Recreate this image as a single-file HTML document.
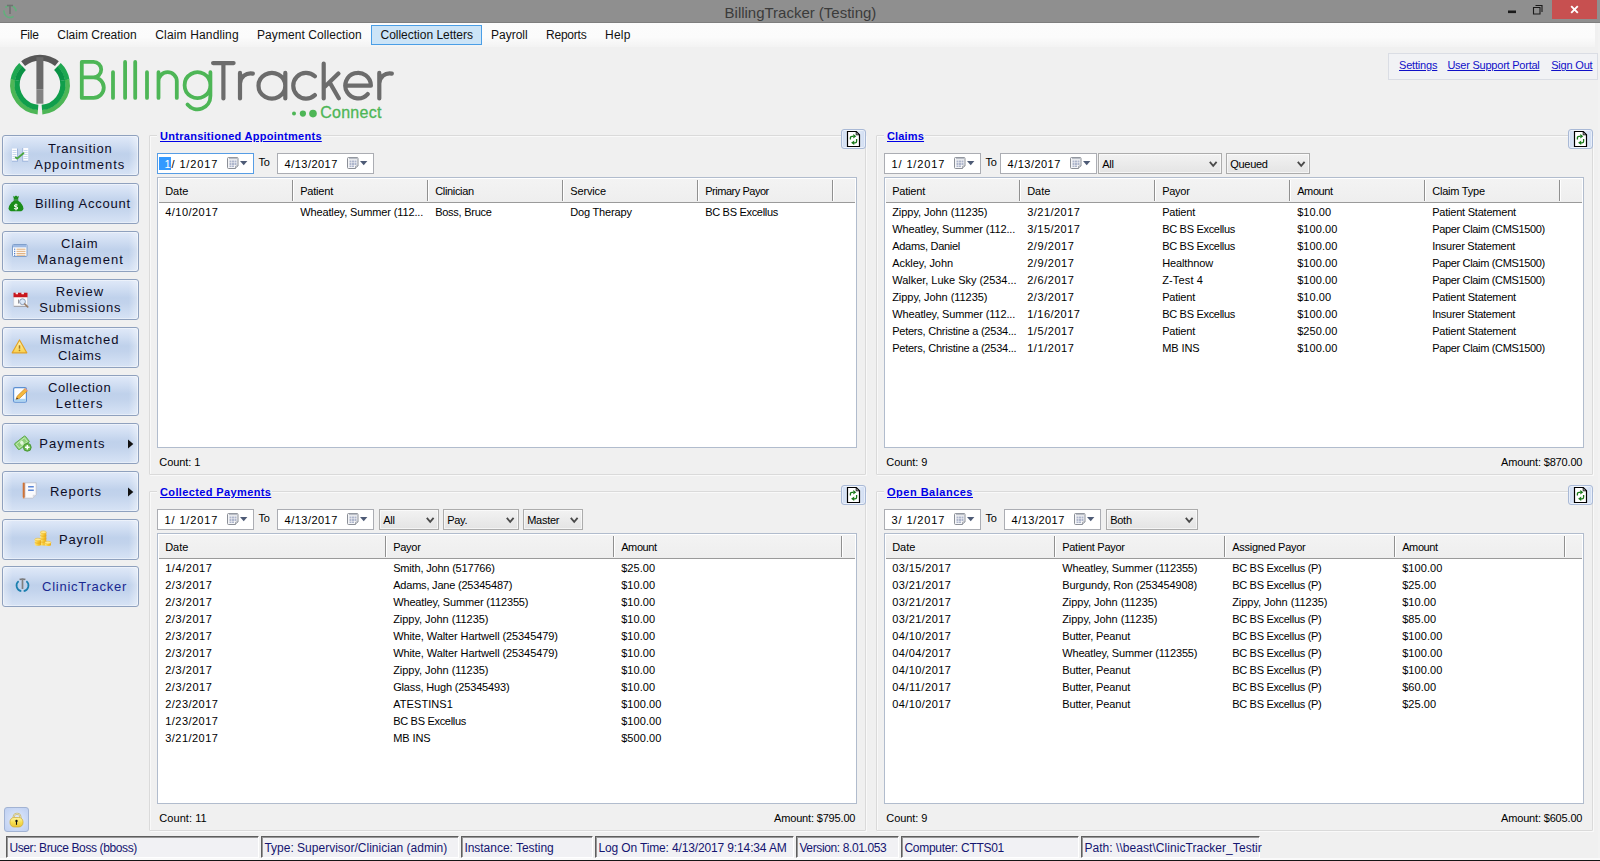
<!DOCTYPE html>
<html><head><meta charset="utf-8"><title>BillingTracker (Testing)</title>
<style>
*{box-sizing:border-box;margin:0;padding:0}
html,body{width:1600px;height:861px;overflow:hidden;background:#f0f0f0}
body{position:relative;font-family:"Liberation Sans",sans-serif;font-size:11px;color:#000}
span{position:absolute;white-space:pre;line-height:1;letter-spacing:-0.27px}
div{position:absolute}
svg{position:absolute;overflow:visible}
.d{letter-spacing:.32px}
.m{letter-spacing:-.06px}
.lnk{color:#1010c8;text-decoration:underline}
.hd{color:#0000e6;font-weight:700;text-decoration:underline;letter-spacing:.3px}
.mn{letter-spacing:-.05px;font-size:12px;color:#111}
.sb{font-size:13px;letter-spacing:.75px;color:#0c0c24}
.st{font-size:12px;color:#151570;letter-spacing:-.1px}
.gb{border:1px solid #dadada;box-shadow:inset 1px 1px 0 rgba(255,255,255,.6),1px 1px 0 rgba(255,255,255,.6);border-radius:1px}
.lv{background:#fff;border:1px solid #b1bccd}
.lh{left:1px;top:1px;right:1px;height:24px;background:linear-gradient(#f3f3f3,#eeeeee);border-bottom:1px solid #9a9a9a}
.sep{top:2px;width:1px;height:21px;background:#909090;box-shadow:1px 0 0 #fff}
.dp{background:#fff;border:1px solid #abadb3;width:97px;height:21px}
.cb{border:1px solid #acacac;height:21px;background:linear-gradient(#f2f2f2,#e4e4e4);box-shadow:inset 0 0 0 1px rgba(255,255,255,.6)}
.btn{left:2px;width:137px;height:41px;border:1px solid #8fa1be;border-radius:3px;
 background:linear-gradient(90deg,rgba(255,255,255,.4),rgba(255,255,255,0) 7%,rgba(255,255,255,0) 93%,rgba(255,255,255,.4)),linear-gradient(#e0e9f8 0%,#d2dff3 20%,#bfd1eb 46%,#c2d3ec 60%,#d7e3f5 100%);box-shadow:inset 0 0 0 1px rgba(255,255,255,.4)}
.rb{width:25px;height:20px;border:1px solid #a9b9d6;border-radius:3px;background:linear-gradient(90deg,#cfdcf2,#e9f0fa 40%,#e9f0fa 60%,#cfdcf2);box-shadow:inset 0 0 0 1px rgba(255,255,255,.5)}
.sp{top:836px;height:22px;background:#f1f1f4;border-top:1px solid #5e5e5e;border-left:1px solid #5e5e5e;border-right:1px solid #fff;border-bottom:1px solid #fff;box-shadow:inset 1px 1px 0 #989898}
</style></head><body>
<div style="left:0;top:0;width:1600px;height:23px;background:#8f8f8f;border-bottom:1px solid #7e7e7e"></div>
<div style="left:1598px;top:23px;width:2px;height:838px;background:#f2f2f2"></div>
<svg style="left:2px;top:3px;opacity:.8" width="16" height="16" viewBox="0 0 16 16"><circle cx="8" cy="8.5" r="6" fill="none" stroke="#58b878" stroke-width="1.6" stroke-dasharray="14 3 14 7" stroke-dashoffset="-5.5"/><path d="M5 2.6h6M8 2.6v8.4" stroke="#6a6a6a" stroke-width="1.5" fill="none"/></svg>
<span style="left:724.60px;top:4.70px;font-size:15px;color:#3b3b3b;letter-spacing:-0.013px;">BillingTracker (Testing)</span>
<div style="left:1552px;top:0;width:45px;height:19px;background:#c75050"></div>
<svg style="left:1500px;top:0" width="100" height="22" viewBox="0 0 100 22">
<rect x="8" y="10.5" width="8" height="2.6" fill="#1a1a1a"/>
<path d="M35.5 5.5h6.5v6.5M33.5 7.5h6.500v6.500h-6.500z" fill="none" stroke="#1a1a1a" stroke-width="1.1"/>
<path d="M71.2 6.2l6.600 6.600M77.800 6.200l-6.600 6.600" stroke="#fff" stroke-width="1.9"/>
</svg>
<div style="left:0;top:23px;width:1595px;height:24px;background:linear-gradient(#fcfcfc 0%,#fbfbfb 60%,#f3f3f3 100%)"></div>
<div style="left:371px;top:25px;width:111px;height:20px;background:#cce4f7;border:1px solid #4a9ee6"></div>
<span class="mn" style="left:20.20px;top:28.54px;font-size:12px;letter-spacing:-0.181px;">File</span>
<span class="mn" style="left:57.30px;top:28.54px;font-size:12px;letter-spacing:-0.005px;">Claim Creation</span>
<span class="mn" style="left:155.30px;top:28.54px;font-size:12px;letter-spacing:0.148px;">Claim Handling</span>
<span class="mn" style="left:257.00px;top:28.54px;font-size:12px;letter-spacing:0.077px;">Payment Collection</span>
<span class="mn" style="left:380.50px;top:28.54px;font-size:12px;letter-spacing:-0.013px;">Collection Letters</span>
<span class="mn" style="left:491.00px;top:28.54px;font-size:12px;letter-spacing:0.002px;">Payroll</span>
<span class="mn" style="left:546.00px;top:28.54px;font-size:12px;letter-spacing:-0.222px;">Reports</span>
<span class="mn" style="left:605.00px;top:28.54px;font-size:12px;letter-spacing:0.237px;">Help</span>
<svg style="left:0;top:0" width="420" height="130" viewBox="0 0 420 130"><g fill="none"><path d="M20.83,64.75A27.6,27.6 0 0 0 12.82,79.81" stroke="#1fa751" stroke-width="4.6"/><path d="M24.09,68.13A22.9,22.9 0 0 0 17.45,80.62" stroke="#0a9245" stroke-width="5.2"/><path d="M12.84,79.67A27.6,27.6 0 0 0 37.79,112.11" stroke="#4db656" stroke-width="4.6"/><path d="M17.47,80.51A22.9,22.9 0 0 0 38.16,107.43" stroke="#109e4b" stroke-width="5.2"/><path d="M59.17,64.75A27.6,27.6 0 0 1 67.18,79.81" stroke="#1fa751" stroke-width="4.6"/><path d="M55.91,68.13A22.9,22.9 0 0 1 62.55,80.62" stroke="#0a9245" stroke-width="5.2"/><path d="M67.16,79.67A27.6,27.6 0 0 1 42.21,112.11" stroke="#4db656" stroke-width="4.6"/><path d="M62.53,80.51A22.9,22.9 0 0 1 41.84,107.43" stroke="#109e4b" stroke-width="5.2"/></g><path d="M23.10,63.73A26.85,26.85 0 0 1 56.90,63.73" fill="none" stroke="#575757" stroke-width="6.1"/><rect x="36.4" y="57.2" width="7" height="32" fill="#696969"/><rect x="36.4" y="89.2" width="7" height="14.5" fill="#828282"/><path d="M81.8,61.9V97.9M81.8,61.9H93.5A7.7,7.7 0 0 1 93.5,77.3H81.8M93.5,77.3A10.3,10.3 0 0 1 93.5,97.9H81.8M113,72.2V97.9M125.1,61.9V97.9M135.2,61.9V97.9M147,72.2V97.9M158.5,72.2V97.9M158.5,81.35A9.15,9.15 0 0 1 176.8,81.35V97.9M210.4,85.1A12.9,12.9 0 1 0 210.4,85.2M210.4,72.2V96.1A12.9,12.9 0 0 1 187.5,104.5" fill="none" stroke="#4db656" stroke-width="3.8" stroke-linecap="round" stroke-linejoin="round"/><path d="M213.1,63.1H233.6M223.4,63.1V98.5M240,72.9V98.5M240,83.5C240.3,76.8 246,72.4 252.8,73.6M285.3,85.7A13.4,12.85 0 1 0 285.3,85.8M285.3,72.9V98.5M314.86,76.30A12.85,12.85 0 1 0 314.86,95.10M323.7,63.5V98.5M324.5,87L338.4,73.6M329.8,82.6L338.8,98.2M345.2,85.7H370.9A12.8,12.8 0 1 0 367.71,94.10M379.3,72.9V98.5M379.3,83.5C379.6,76.8 385,72.4 391.8,73.6" fill="none" stroke="#6c6c6c" stroke-width="4.2" stroke-linecap="round" stroke-linejoin="round"/><circle cx="294" cy="113.6" r="2" fill="#4db656"/><circle cx="302.9" cy="113.6" r="3.1" fill="#4db656"/><circle cx="313" cy="113.6" r="3.8" fill="#4db656"/></svg>
<span style="left:320.20px;top:105.16px;font-size:16px;color:#4db656;letter-spacing:0.268px;-webkit-text-stroke:.3px #4db656;">Connect</span>
<div style="left:1388px;top:53px;width:210px;height:27px;border:1px solid #dadde4;background:#f1f2f5"></div>
<span class="lnk" style="left:1399.00px;top:60.29px;letter-spacing:-0.179px;">Settings</span>
<span class="lnk" style="left:1447.40px;top:60.29px;letter-spacing:-0.234px;">User Support Portal</span>
<span class="lnk" style="left:1551.20px;top:60.29px;letter-spacing:-0.188px;">Sign Out</span>
<div class="btn" style="top:135px"></div>
<div class="btn" style="top:183px"></div>
<div class="btn" style="top:231px"></div>
<div class="btn" style="top:279px"></div>
<div class="btn" style="top:327px"></div>
<div class="btn" style="top:375px"></div>
<div class="btn" style="top:423px"></div>
<div class="btn" style="top:471px"></div>
<div class="btn" style="top:519px"></div>
<div class="btn" style="top:566px"></div>
<span style="left:47.90px;top:141.60px;font-size:13px;color:#0d0d26;letter-spacing:0.810px;">Transition</span>
<span style="left:34.30px;top:157.60px;font-size:13px;color:#0d0d26;letter-spacing:0.955px;">Appointments</span>
<span style="left:34.90px;top:197.40px;font-size:13px;color:#0d0d26;letter-spacing:0.760px;">Billing Account</span>
<span style="left:61.00px;top:237.40px;font-size:13px;color:#0d0d26;letter-spacing:0.841px;">Claim</span>
<span style="left:37.20px;top:253.40px;font-size:13px;color:#0d0d26;letter-spacing:1.090px;">Management</span>
<span style="left:55.80px;top:285.40px;font-size:13px;color:#0d0d26;letter-spacing:0.935px;">Review</span>
<span style="left:39.20px;top:301.40px;font-size:13px;color:#0d0d26;letter-spacing:0.770px;">Submissions</span>
<span style="left:40.00px;top:333.40px;font-size:13px;color:#0d0d26;letter-spacing:0.936px;">Mismatched</span>
<span style="left:58.00px;top:349.00px;font-size:13px;color:#0d0d26;letter-spacing:0.673px;">Claims</span>
<span style="left:47.90px;top:380.80px;font-size:13px;color:#0d0d26;letter-spacing:0.634px;">Collection</span>
<span style="left:55.80px;top:396.80px;font-size:13px;color:#0d0d26;letter-spacing:1.175px;">Letters</span>
<span style="left:39.20px;top:436.80px;font-size:13px;color:#0d0d26;letter-spacing:1.084px;">Payments</span>
<span style="left:50.00px;top:484.60px;font-size:13px;color:#0d0d26;letter-spacing:0.928px;">Reports</span>
<span style="left:59.00px;top:532.70px;font-size:13px;color:#0d0d26;letter-spacing:0.775px;">Payroll</span>
<span style="left:42.10px;top:579.70px;font-size:13px;color:#1a2890;letter-spacing:0.745px;">ClinicTracker</span>
<svg style="left:127px;top:439px" width="8" height="10" viewBox="0 0 8 10"><path d="M1 0.500L6.300 5 1 9.500z" fill="#111"/></svg>
<svg style="left:127px;top:486.7px" width="8" height="10" viewBox="0 0 8 10"><path d="M1 0.500L6.300 5 1 9.500z" fill="#111"/></svg>
<div style="left:4px;top:807px;width:25px;height:25px;border:1px solid #a2b3d3;border-radius:3px;background:radial-gradient(ellipse at 50% 50%,#e3ebfb 0%,#c9d8f5 65%,#bfd0f1 100%)"></div>
<svg style="left:9px;top:811px" width="16" height="18" viewBox="0 0 16 18">
<defs><linearGradient id="lk" x1="0" y1="0" x2="0" y2="1"><stop offset="0" stop-color="#fcf3a8"/><stop offset=".5" stop-color="#f7df52"/><stop offset="1" stop-color="#e9c538"/></linearGradient></defs>
<path d="M4.700 8V6.050a3.350 3.350 0 0 1 6.700 0V8" fill="none" stroke="#bfb074" stroke-width="2.100"/>
<path d="M4.700 8V6.050a3.350 3.350 0 0 1 6.700 0V8" fill="none" stroke="#ece6b8" stroke-width=".9"/>
<rect x="1" y="6.500" width="13" height="9.500" rx="4.200" fill="url(#lk)" stroke="#cfa92e" stroke-width=".7"/>
<circle cx="7.500" cy="9.800" r="1.150" fill="#111"/><path d="M7.500 9.800v4" stroke="#111" stroke-width="1.100"/><path d="M6.300 10.800l1.200-1.600 1.200 1.600z" fill="#111"/></svg>
<svg style="left:11px;top:147px" width="18" height="16" viewBox="0 0 18 16">
<rect x="1" y="1.500" width="5.500" height="12.500" fill="#fdfdff"/><rect x="11.700" y="1" width="5.500" height="13" fill="#fdfdff"/>
<path d="M1.500 3.500h4M1.500 5.500h4M1.500 7.500h4M1.500 9.500h4M1.500 11.500h4M12.700 3.500h4M12.700 5.500h4M12.700 7.500h4M12.700 9.500h4M12.700 11.500h4" stroke="#c6d6ee" stroke-width=".9"/>
<path d="M6.500 1.500v12.500M11.700 1v13" stroke="#9fb6dc" stroke-width="1"/>
<path d="M1 14.200h6M11.200 14.200h6" stroke="#9fb6dc" stroke-width="1"/>
<path d="M4.800 10.600l1.300 1L12.400 6.200" fill="none" stroke="#4aa53e" stroke-width="1.900" stroke-linecap="round" stroke-linejoin="round"/></svg>
<svg style="left:8px;top:194.500px" width="16" height="17" viewBox="0 0 16 17">
<path d="M5 .8l1.200 1 1.800-1.300 1.800 1.300 1.200-1-.9 3.200h-4.200z" fill="#1c8c1c"/>
<path d="M5.700 4.300h4.600v1.400h-4.600z" fill="#157a15"/>
<path d="M5.800 5.700C3 7.500.6 10.600.6 13.200c0 2.200 1.600 3.100 3.600 3.100h7.600c2 0 3.600-.9 3.600-3.100 0-2.600-2.400-5.700-5.200-7.500z" fill="#1a8d1a"/>
<path d="M9.500 10.300c-.5-.8-2.900-.9-3 .4s3.100.8 3.100 2.200-2.800 1.300-3.400.3" fill="none" stroke="#fff" stroke-width="1.100"/><path d="M8 8.600v6.900" stroke="#fff" stroke-width=".8"/></svg>
<svg style="left:12px;top:244px" width="16" height="13" viewBox="0 0 16 13">
<rect x=".5" y=".5" width="14.500" height="12" rx="1" fill="#fff" stroke="#7f9fcc"/>
<rect x="1" y="1" width="13.500" height="2.400" fill="#9db9e3"/>
<path d="M4.500 5.200h9M4.500 7.300h9M4.500 9.400h9M4.500 11.200h9" stroke="#d9a066" stroke-width=".9"/>
<path d="M2 5.200h1.300M2 7.300h1.300M2 9.400h1.300M2 11.200h1.300" stroke="#3f6fc0" stroke-width="1"/></svg>
<svg style="left:12.500px;top:291.500px" width="17" height="16" viewBox="0 0 17 16">
<rect x=".8" y="3" width="13.500" height="11.500" fill="#fcfcfc" stroke="#c9c9cf" stroke-width=".6"/>
<path d="M.5.800h2.300v1.300h2.200V.8h3.600v1.300h2.200V.8h3.700v4.500H.5z" fill="#c8171f"/>
<path d="M2.800.8h2.200v1.500H2.800zM8.600.8h2.200v1.500H8.600z" fill="#f6e6e6"/>
<path d="M.8 14.300h13.500" stroke="#9a9aa2" stroke-width="1"/>
<circle cx="9.500" cy="9.700" r="2.900" fill="#dbe8f8" stroke="#8a9bb6" stroke-width="1"/>
<path d="M11.800 12l2.900 2.800" stroke="#9a7d66" stroke-width="1.700" stroke-linecap="round"/>
<path d="M5.500 7.500v4" stroke="#8a8a90" stroke-width=".9"/></svg>
<svg style="left:11.200px;top:339.200px" width="17" height="15" viewBox="0 0 17 15">
<defs><linearGradient id="wg" x1="0" y1="0" x2="0" y2="1"><stop offset="0" stop-color="#fff6b5"/><stop offset="1" stop-color="#f9d04a"/></linearGradient></defs>
<path d="M8.500 1L15.800 13.800H1.200z" fill="url(#wg)" stroke="#e3a325" stroke-width="1.200" stroke-linejoin="round"/>
<path d="M8.500 6.300v3.400" stroke="#a77a22" stroke-width="1.500"/><circle cx="8.500" cy="11.300" r=".85" fill="#a77a22"/></svg>
<svg style="left:13px;top:387px" width="16" height="16" viewBox="0 0 16 16">
<rect x=".6" y=".6" width="12.800" height="14.600" rx="1.500" fill="#fbfdff" stroke="#5c8fd2" stroke-width="1.200"/>
<rect x="1.300" y="11.800" width="11.400" height="2.700" fill="#a9d3f2"/>
<path d="M3.200 12.300l1-3.200L12 1.600l2.400 2.300-7.900 7.500z" fill="#f5b83c" stroke="#c9872a" stroke-width=".7" stroke-linejoin="round"/>
<path d="M3.200 12.300l.6-1.900 1.400 1.300z" fill="#3a2a1a"/>
<path d="M12 1.600l2.400 2.300" stroke="#e59a9a" stroke-width="1.200"/></svg>
<svg style="left:14.800px;top:435px" width="17" height="17" viewBox="0 0 17 17">
<g transform="rotate(-38 7 8)"><rect x=".2" y="4" width="13.600" height="7.600" rx=".8" fill="#8fd07a" stroke="#5aa848" stroke-width=".9"/>
<rect x="1.800" y="5.400" width="10.400" height="4.800" fill="none" stroke="#c9ecbc" stroke-width=".8"/><ellipse cx="7" cy="7.800" rx="1.700" ry="2" fill="#e4f6dc"/></g>
<circle cx="12.300" cy="12.300" r="3.900" fill="#69b84d" stroke="#3f8f2b" stroke-width=".8"/>
<path d="M12.300 10v4.600M10 12.300h4.600" stroke="#fff" stroke-width="1.500"/></svg>
<svg style="left:22px;top:482px" width="15.800" height="17" viewBox="0 0 15 17" preserveAspectRatio="none">
<path d="M2.600.8h10.900v12l-3.300 3.400H2.600z" fill="#fbfbfd" stroke="#b9bcc8" stroke-width=".8"/>
<path d="M13.400 12.800l-3.200 3.300v-3.300z" fill="#d9dbe4"/>
<path d="M1.600.6v15.800" stroke="#e0813f" stroke-width="1.500"/>
<path d="M.5 2h2.600M.5 4h2.600M.5 6h2.600M.5 8h2.600M.5 10h2.600M.5 12h2.600M.5 14h2.600" stroke="#b85a20" stroke-width=".7"/>
<path d="M5.800 4.800h5.400M5.800 8.200h5.400" stroke="#5b86d6" stroke-width="1.500"/></svg>
<svg style="left:33.500px;top:529.500px" width="18" height="18" viewBox="0 0 18 18">
<defs><linearGradient id="cg" x1="0" y1="0" x2="1" y2="0"><stop offset="0" stop-color="#ffe680"/><stop offset=".55" stop-color="#f7c830"/><stop offset="1" stop-color="#e9a91c"/></linearGradient></defs>
<path d="M6.300 2.200v12.500c0 1.200 6 1.200 6 0V2.200z" fill="url(#cg)"/><ellipse cx="9.300" cy="2.200" rx="3" ry="1.300" fill="#ffe98f" stroke="#e9b52a" stroke-width=".5"/>
<path d="M6.300 5.300c0 1.200 6 1.200 6 0M6.300 8.300c0 1.200 6 1.200 6 0M6.300 11.300c0 1.200 6 1.200 6 0" fill="none" stroke="#dfa21f" stroke-width=".6"/>
<path d="M.8 9.500v5.300c0 1.300 6.200 1.300 6.200 0V9.500z" fill="url(#cg)"/><ellipse cx="3.900" cy="9.500" rx="3.100" ry="1.300" fill="#ffe98f" stroke="#e9b52a" stroke-width=".5"/>
<path d="M.8 12.300c0 1.200 6.200 1.200 6.200 0" fill="none" stroke="#dfa21f" stroke-width=".6"/>
<path d="M10.800 12.600v2.400c0 1.300 6.200 1.300 6.200 0v-2.400z" fill="url(#cg)"/><ellipse cx="13.900" cy="12.600" rx="3.100" ry="1.400" fill="#ffe98f" stroke="#e9b52a" stroke-width=".5"/></svg>
<svg style="left:15px;top:577.500px" width="15" height="15" viewBox="0 0 15 15">
<path d="M3.600 3.200A5.700 5.700 0 0 0 6.300 13.200" fill="none" stroke="#1b7fae" stroke-width="1.700"/>
<path d="M11.400 3.200A5.700 5.700 0 0 1 8.700 13.200" fill="none" stroke="#1b7fae" stroke-width="1.700"/>
<path d="M4.600 1.600Q7.500.3 10.400 1.600" fill="none" stroke="#777" stroke-width="1.600"/><path d="M7.500 1.200v9.800" stroke="#808080" stroke-width="1.700"/></svg>
<div class="gb" style="left:149px;top:135px;width:717px;height:340px"></div>
<div style="left:157px;top:132px;width:165.6px;height:8px;background:#f0f0f0"></div>
<span class="hd" style="left:160.00px;top:130.79px;font-weight:700;letter-spacing:0.281px;">Untransitioned Appointments</span>
<div class="rb" style="left:841px;top:129px"></div><svg style="left:846px;top:130px" width="15" height="18" viewBox="0 0 15 18"><path d="M1.500 1.500h8.800l3.200 3.200v11.800h-12z" fill="#fff" stroke="#000" stroke-width="1.200"/><path d="M10.200 1.800v3h3" fill="none" stroke="#000" stroke-width=".9"/><g fill="none" stroke="#1a7a1a" stroke-width="1.300"><path d="M4.400 9.600V7.900Q4.400 6.300 6 6.300H7.500"/><path d="M10.600 9V11.200Q10.600 12.800 9 12.800H8"/></g><path d="M7.300 4L10.300 6.300 7.300 8.600zM8.200 10.500L5.100 12.800 8.200 15.100z" fill="#1a7a1a"/></svg>
<div class="dp" style="left:157px;top:153px;border-color:#569de5"></div>
<span class="d" style="left:164.60px;top:158.59px;letter-spacing:0.853px;">1/ 1/2017</span>
<div style="left:159.4px;top:157.3px;width:11.3px;height:12.4px;background:#3399ff"></div>
<span style="left:164.60px;top:158.59px;color:#fff;letter-spacing:0.000px;">1</span>
<svg style="left:227px;top:157px" width="12" height="13" viewBox="0 0 12 13"><path d="M1.500 .5h8.500a1 1 0 0 1 1 1v7.500l-2.500 2.500h-7a1 1 0 0 1-1-1v-9a1 1 0 0 1 1-1z" fill="#f4f5f7" stroke="#8b8f97"/><path d="M8.500 11.500v-2a.5.500 0 0 1 .5-.5h2" fill="#dfe1e5" stroke="#8b8f97" stroke-width=".8"/><path d="M2 1.500h8" stroke="#b9bdc6" stroke-width="1.400"/><path d="M2.500 3.500h2v2h-2zM5 3.500h2v2h-2zM7.500 3.500h2v2h-2zM2.500 6h2v2h-2zM5 6h2v2h-2zM7.500 6h2v2h-2zM2.500 8.500h2v1.500h-2zM5 8.500h2v1.500h-2z" fill="#aeb6cc"/></svg>
<svg style="left:240px;top:161px" width="8" height="5" viewBox="0 0 8 5"><path d="M0 0h7.400l-3.700 4.300z" fill="#4e5b76"/></svg>
<span style="left:258.60px;top:157.09px;">To</span>
<div class="dp" style="left:277px;top:153px;border-color:#abadb3"></div>
<span class="d" style="left:284.60px;top:158.59px;letter-spacing:0.470px;">4/13/2017</span>
<svg style="left:347px;top:157px" width="12" height="13" viewBox="0 0 12 13"><path d="M1.500 .5h8.500a1 1 0 0 1 1 1v7.500l-2.500 2.500h-7a1 1 0 0 1-1-1v-9a1 1 0 0 1 1-1z" fill="#f4f5f7" stroke="#8b8f97"/><path d="M8.500 11.500v-2a.5.500 0 0 1 .5-.5h2" fill="#dfe1e5" stroke="#8b8f97" stroke-width=".8"/><path d="M2 1.500h8" stroke="#b9bdc6" stroke-width="1.400"/><path d="M2.500 3.500h2v2h-2zM5 3.500h2v2h-2zM7.500 3.500h2v2h-2zM2.500 6h2v2h-2zM5 6h2v2h-2zM7.500 6h2v2h-2zM2.500 8.500h2v1.500h-2zM5 8.500h2v1.500h-2z" fill="#aeb6cc"/></svg>
<svg style="left:360px;top:161px" width="8" height="5" viewBox="0 0 8 5"><path d="M0 0h7.400l-3.700 4.300z" fill="#4e5b76"/></svg>
<div class="lv" style="left:157px;top:177px;width:700px;height:271px"><div class="lh"></div><div class="sep" style="left:134px"></div><div class="sep" style="left:269px"></div><div class="sep" style="left:404px"></div><div class="sep" style="left:539px"></div><div class="sep" style="left:674px"></div></div>
<span style="left:165.20px;top:185.69px;letter-spacing:-0.050px;">Date</span>
<span style="left:300.20px;top:185.69px;letter-spacing:-0.192px;">Patient</span>
<span style="left:435.20px;top:185.69px;letter-spacing:-0.335px;">Clinician</span>
<span style="left:570.20px;top:185.69px;letter-spacing:-0.131px;">Service</span>
<span style="left:705.20px;top:185.69px;letter-spacing:-0.466px;">Primary Payor</span>
<span class="d" style="left:165.20px;top:206.69px;letter-spacing:0.470px;">4/10/2017</span>
<span style="left:300.20px;top:206.69px;letter-spacing:-0.132px;">Wheatley, Summer (112...</span>
<span style="left:435.20px;top:206.69px;letter-spacing:-0.261px;">Boss, Bruce</span>
<span style="left:570.20px;top:206.69px;letter-spacing:-0.169px;">Dog Therapy</span>
<span style="left:705.20px;top:206.69px;letter-spacing:-0.302px;">BC BS Excellus</span>
<span style="left:159.30px;top:456.89px;letter-spacing:-0.056px;">Count: 1</span>
<div class="gb" style="left:876px;top:135px;width:717px;height:340px"></div>
<div style="left:884px;top:132px;width:41px;height:8px;background:#f0f0f0"></div>
<span class="hd" style="left:887.00px;top:130.79px;font-weight:700;letter-spacing:0.164px;">Claims</span>
<div class="rb" style="left:1568px;top:129px"></div><svg style="left:1573px;top:130px" width="15" height="18" viewBox="0 0 15 18"><path d="M1.500 1.500h8.800l3.200 3.200v11.800h-12z" fill="#fff" stroke="#000" stroke-width="1.200"/><path d="M10.200 1.800v3h3" fill="none" stroke="#000" stroke-width=".9"/><g fill="none" stroke="#1a7a1a" stroke-width="1.300"><path d="M4.400 9.600V7.900Q4.400 6.300 6 6.300H7.500"/><path d="M10.600 9V11.200Q10.600 12.800 9 12.800H8"/></g><path d="M7.300 4L10.300 6.300 7.300 8.600zM8.200 10.500L5.100 12.800 8.200 15.100z" fill="#1a7a1a"/></svg>
<div class="dp" style="left:884px;top:153px;border-color:#abadb3"></div>
<span class="d" style="left:891.60px;top:158.59px;letter-spacing:0.853px;">1/ 1/2017</span>
<svg style="left:954px;top:157px" width="12" height="13" viewBox="0 0 12 13"><path d="M1.500 .5h8.500a1 1 0 0 1 1 1v7.500l-2.500 2.500h-7a1 1 0 0 1-1-1v-9a1 1 0 0 1 1-1z" fill="#f4f5f7" stroke="#8b8f97"/><path d="M8.500 11.500v-2a.5.500 0 0 1 .5-.5h2" fill="#dfe1e5" stroke="#8b8f97" stroke-width=".8"/><path d="M2 1.500h8" stroke="#b9bdc6" stroke-width="1.400"/><path d="M2.500 3.500h2v2h-2zM5 3.500h2v2h-2zM7.500 3.500h2v2h-2zM2.500 6h2v2h-2zM5 6h2v2h-2zM7.500 6h2v2h-2zM2.500 8.500h2v1.500h-2zM5 8.500h2v1.500h-2z" fill="#aeb6cc"/></svg>
<svg style="left:967px;top:161px" width="8" height="5" viewBox="0 0 8 5"><path d="M0 0h7.400l-3.700 4.300z" fill="#4e5b76"/></svg>
<span style="left:985.50px;top:157.09px;">To</span>
<div class="dp" style="left:1000px;top:153px;border-color:#abadb3"></div>
<span class="d" style="left:1007.60px;top:158.59px;letter-spacing:0.470px;">4/13/2017</span>
<svg style="left:1070px;top:157px" width="12" height="13" viewBox="0 0 12 13"><path d="M1.500 .5h8.500a1 1 0 0 1 1 1v7.500l-2.500 2.500h-7a1 1 0 0 1-1-1v-9a1 1 0 0 1 1-1z" fill="#f4f5f7" stroke="#8b8f97"/><path d="M8.500 11.500v-2a.5.500 0 0 1 .5-.5h2" fill="#dfe1e5" stroke="#8b8f97" stroke-width=".8"/><path d="M2 1.500h8" stroke="#b9bdc6" stroke-width="1.400"/><path d="M2.500 3.500h2v2h-2zM5 3.500h2v2h-2zM7.500 3.500h2v2h-2zM2.500 6h2v2h-2zM5 6h2v2h-2zM7.500 6h2v2h-2zM2.500 8.500h2v1.500h-2zM5 8.500h2v1.500h-2z" fill="#aeb6cc"/></svg>
<svg style="left:1083px;top:161px" width="8" height="5" viewBox="0 0 8 5"><path d="M0 0h7.400l-3.700 4.300z" fill="#4e5b76"/></svg>
<div class="cb" style="left:1098px;top:153px;width:124px"></div>
<span style="left:1102.20px;top:158.59px;">All</span>
<svg style="left:1209px;top:160.5px" width="9" height="7" viewBox="0 0 9 7"><path d="M.8.900l3.400 4 3.400-4" fill="none" stroke="#4a4a4a" stroke-width="1.800"/></svg>
<div class="cb" style="left:1226px;top:153px;width:84px"></div>
<span style="left:1230.20px;top:158.59px;">Queued</span>
<svg style="left:1297px;top:160.5px" width="9" height="7" viewBox="0 0 9 7"><path d="M.8.900l3.400 4 3.400-4" fill="none" stroke="#4a4a4a" stroke-width="1.800"/></svg>
<div class="lv" style="left:884px;top:177px;width:700px;height:271px"><div class="lh"></div><div class="sep" style="left:134px"></div><div class="sep" style="left:269px"></div><div class="sep" style="left:404px"></div><div class="sep" style="left:539px"></div><div class="sep" style="left:674px"></div></div>
<span style="left:892.20px;top:185.69px;letter-spacing:-0.192px;">Patient</span>
<span style="left:1027.20px;top:185.69px;letter-spacing:-0.050px;">Date</span>
<span style="left:1162.20px;top:185.69px;letter-spacing:-0.263px;">Payor</span>
<span style="left:1297.20px;top:185.69px;letter-spacing:-0.404px;">Amount</span>
<span style="left:1432.20px;top:185.69px;letter-spacing:-0.214px;">Claim Type</span>
<span style="left:892.20px;top:206.69px;letter-spacing:-0.050px;">Zippy, John (11235)</span>
<span class="d" style="left:1027.20px;top:206.69px;letter-spacing:0.470px;">3/21/2017</span>
<span style="left:1162.20px;top:206.69px;letter-spacing:-0.192px;">Patient</span>
<span class="m" style="left:1297.20px;top:206.69px;letter-spacing:0.049px;">$10.00</span>
<span style="left:1432.20px;top:206.69px;letter-spacing:-0.222px;">Patient Statement</span>
<span style="left:892.20px;top:223.69px;letter-spacing:-0.132px;">Wheatley, Summer (112...</span>
<span class="d" style="left:1027.20px;top:223.69px;letter-spacing:0.470px;">3/15/2017</span>
<span style="left:1162.20px;top:223.69px;letter-spacing:-0.302px;">BC BS Excellus</span>
<span class="m" style="left:1297.20px;top:223.69px;letter-spacing:0.056px;">$100.00</span>
<span style="left:1432.20px;top:223.69px;letter-spacing:-0.336px;">Paper Claim (CMS1500)</span>
<span style="left:892.20px;top:240.69px;letter-spacing:-0.287px;">Adams, Daniel</span>
<span class="d" style="left:1027.20px;top:240.69px;letter-spacing:0.553px;">2/9/2017</span>
<span style="left:1162.20px;top:240.69px;letter-spacing:-0.302px;">BC BS Excellus</span>
<span class="m" style="left:1297.20px;top:240.69px;letter-spacing:0.056px;">$100.00</span>
<span style="left:1432.20px;top:240.69px;letter-spacing:-0.265px;">Insurer Statement</span>
<span style="left:892.20px;top:257.69px;letter-spacing:-0.060px;">Ackley, John</span>
<span class="d" style="left:1027.20px;top:257.69px;letter-spacing:0.553px;">2/9/2017</span>
<span style="left:1162.20px;top:257.69px;letter-spacing:-0.136px;">Healthnow</span>
<span class="m" style="left:1297.20px;top:257.69px;letter-spacing:0.056px;">$100.00</span>
<span style="left:1432.20px;top:257.69px;letter-spacing:-0.336px;">Paper Claim (CMS1500)</span>
<span style="left:892.20px;top:274.69px;letter-spacing:-0.022px;">Walker, Luke Sky (2534...</span>
<span class="d" style="left:1027.20px;top:274.69px;letter-spacing:0.553px;">2/6/2017</span>
<span style="left:1162.20px;top:274.69px;letter-spacing:0.138px;">Z-Test 4</span>
<span class="m" style="left:1297.20px;top:274.69px;letter-spacing:0.056px;">$100.00</span>
<span style="left:1432.20px;top:274.69px;letter-spacing:-0.336px;">Paper Claim (CMS1500)</span>
<span style="left:892.20px;top:291.69px;letter-spacing:-0.050px;">Zippy, John (11235)</span>
<span class="d" style="left:1027.20px;top:291.69px;letter-spacing:0.553px;">2/3/2017</span>
<span style="left:1162.20px;top:291.69px;letter-spacing:-0.192px;">Patient</span>
<span class="m" style="left:1297.20px;top:291.69px;letter-spacing:0.049px;">$10.00</span>
<span style="left:1432.20px;top:291.69px;letter-spacing:-0.222px;">Patient Statement</span>
<span style="left:892.20px;top:308.69px;letter-spacing:-0.132px;">Wheatley, Summer (112...</span>
<span class="d" style="left:1027.20px;top:308.69px;letter-spacing:0.470px;">1/16/2017</span>
<span style="left:1162.20px;top:308.69px;letter-spacing:-0.302px;">BC BS Excellus</span>
<span class="m" style="left:1297.20px;top:308.69px;letter-spacing:0.056px;">$100.00</span>
<span style="left:1432.20px;top:308.69px;letter-spacing:-0.265px;">Insurer Statement</span>
<span style="left:892.20px;top:325.69px;letter-spacing:-0.239px;">Peters, Christine a (2534...</span>
<span class="d" style="left:1027.20px;top:325.69px;letter-spacing:0.553px;">1/5/2017</span>
<span style="left:1162.20px;top:325.69px;letter-spacing:-0.192px;">Patient</span>
<span class="m" style="left:1297.20px;top:325.69px;letter-spacing:0.056px;">$250.00</span>
<span style="left:1432.20px;top:325.69px;letter-spacing:-0.222px;">Patient Statement</span>
<span style="left:892.20px;top:342.69px;letter-spacing:-0.239px;">Peters, Christine a (2534...</span>
<span class="d" style="left:1027.20px;top:342.69px;letter-spacing:0.553px;">1/1/2017</span>
<span style="left:1162.20px;top:342.69px;letter-spacing:-0.101px;">MB INS</span>
<span class="m" style="left:1297.20px;top:342.69px;letter-spacing:0.056px;">$100.00</span>
<span style="left:1432.20px;top:342.69px;letter-spacing:-0.336px;">Paper Claim (CMS1500)</span>
<span style="left:886.30px;top:456.89px;letter-spacing:-0.056px;">Count: 9</span>
<span style="left:1501.00px;top:456.89px;letter-spacing:-0.164px;">Amount: $870.00</span>
<div class="gb" style="left:149px;top:491px;width:717px;height:340px"></div>
<div style="left:157px;top:488px;width:115px;height:8px;background:#f0f0f0"></div>
<span class="hd" style="left:160.00px;top:486.79px;font-weight:700;letter-spacing:0.374px;">Collected Payments</span>
<div class="rb" style="left:841px;top:485px"></div><svg style="left:846px;top:486px" width="15" height="18" viewBox="0 0 15 18"><path d="M1.500 1.500h8.800l3.200 3.200v11.800h-12z" fill="#fff" stroke="#000" stroke-width="1.200"/><path d="M10.200 1.800v3h3" fill="none" stroke="#000" stroke-width=".9"/><g fill="none" stroke="#1a7a1a" stroke-width="1.300"><path d="M4.400 9.600V7.900Q4.400 6.300 6 6.300H7.500"/><path d="M10.600 9V11.200Q10.600 12.800 9 12.800H8"/></g><path d="M7.300 4L10.300 6.300 7.300 8.600zM8.200 10.500L5.100 12.800 8.200 15.100z" fill="#1a7a1a"/></svg>
<div class="dp" style="left:157px;top:509px;border-color:#abadb3"></div>
<span class="d" style="left:164.60px;top:514.59px;letter-spacing:0.853px;">1/ 1/2017</span>
<svg style="left:227px;top:513px" width="12" height="13" viewBox="0 0 12 13"><path d="M1.500 .5h8.500a1 1 0 0 1 1 1v7.500l-2.500 2.500h-7a1 1 0 0 1-1-1v-9a1 1 0 0 1 1-1z" fill="#f4f5f7" stroke="#8b8f97"/><path d="M8.500 11.500v-2a.5.500 0 0 1 .5-.5h2" fill="#dfe1e5" stroke="#8b8f97" stroke-width=".8"/><path d="M2 1.500h8" stroke="#b9bdc6" stroke-width="1.400"/><path d="M2.500 3.500h2v2h-2zM5 3.500h2v2h-2zM7.500 3.500h2v2h-2zM2.500 6h2v2h-2zM5 6h2v2h-2zM7.500 6h2v2h-2zM2.500 8.500h2v1.500h-2zM5 8.500h2v1.500h-2z" fill="#aeb6cc"/></svg>
<svg style="left:240px;top:517px" width="8" height="5" viewBox="0 0 8 5"><path d="M0 0h7.400l-3.700 4.300z" fill="#4e5b76"/></svg>
<span style="left:258.60px;top:513.09px;">To</span>
<div class="dp" style="left:277px;top:509px;border-color:#abadb3"></div>
<span class="d" style="left:284.60px;top:514.59px;letter-spacing:0.470px;">4/13/2017</span>
<svg style="left:347px;top:513px" width="12" height="13" viewBox="0 0 12 13"><path d="M1.500 .5h8.500a1 1 0 0 1 1 1v7.500l-2.500 2.500h-7a1 1 0 0 1-1-1v-9a1 1 0 0 1 1-1z" fill="#f4f5f7" stroke="#8b8f97"/><path d="M8.500 11.500v-2a.5.500 0 0 1 .5-.5h2" fill="#dfe1e5" stroke="#8b8f97" stroke-width=".8"/><path d="M2 1.500h8" stroke="#b9bdc6" stroke-width="1.400"/><path d="M2.500 3.500h2v2h-2zM5 3.500h2v2h-2zM7.500 3.500h2v2h-2zM2.500 6h2v2h-2zM5 6h2v2h-2zM7.500 6h2v2h-2zM2.500 8.500h2v1.500h-2zM5 8.500h2v1.500h-2z" fill="#aeb6cc"/></svg>
<svg style="left:360px;top:517px" width="8" height="5" viewBox="0 0 8 5"><path d="M0 0h7.400l-3.700 4.300z" fill="#4e5b76"/></svg>
<div class="cb" style="left:379px;top:509px;width:60px"></div>
<span style="left:383.20px;top:514.59px;">All</span>
<svg style="left:426px;top:516.5px" width="9" height="7" viewBox="0 0 9 7"><path d="M.8.900l3.400 4 3.400-4" fill="none" stroke="#4a4a4a" stroke-width="1.800"/></svg>
<div class="cb" style="left:443px;top:509px;width:76px"></div>
<span style="left:447.20px;top:514.59px;">Pay.</span>
<svg style="left:506px;top:516.5px" width="9" height="7" viewBox="0 0 9 7"><path d="M.8.900l3.400 4 3.400-4" fill="none" stroke="#4a4a4a" stroke-width="1.800"/></svg>
<div class="cb" style="left:523px;top:509px;width:60px"></div>
<span style="left:527.20px;top:514.59px;">Master</span>
<svg style="left:570px;top:516.5px" width="9" height="7" viewBox="0 0 9 7"><path d="M.8.900l3.400 4 3.400-4" fill="none" stroke="#4a4a4a" stroke-width="1.800"/></svg>
<div class="lv" style="left:157px;top:533px;width:700px;height:271px"><div class="lh"></div><div class="sep" style="left:227px"></div><div class="sep" style="left:455px"></div><div class="sep" style="left:683px"></div></div>
<span style="left:165.20px;top:541.69px;letter-spacing:-0.050px;">Date</span>
<span style="left:393.20px;top:541.69px;letter-spacing:-0.263px;">Payor</span>
<span style="left:621.20px;top:541.69px;letter-spacing:-0.404px;">Amount</span>
<span class="d" style="left:165.20px;top:562.69px;letter-spacing:0.553px;">1/4/2017</span>
<span style="left:393.20px;top:562.69px;letter-spacing:-0.183px;">Smith, John (517766)</span>
<span class="m" style="left:621.20px;top:562.69px;letter-spacing:0.049px;">$25.00</span>
<span class="d" style="left:165.20px;top:579.69px;letter-spacing:0.553px;">2/3/2017</span>
<span style="left:393.20px;top:579.69px;letter-spacing:-0.206px;">Adams, Jane (25345487)</span>
<span class="m" style="left:621.20px;top:579.69px;letter-spacing:0.049px;">$10.00</span>
<span class="d" style="left:165.20px;top:596.69px;letter-spacing:0.553px;">2/3/2017</span>
<span style="left:393.20px;top:596.69px;letter-spacing:-0.154px;">Wheatley, Summer (112355)</span>
<span class="m" style="left:621.20px;top:596.69px;letter-spacing:0.049px;">$10.00</span>
<span class="d" style="left:165.20px;top:613.69px;letter-spacing:0.553px;">2/3/2017</span>
<span style="left:393.20px;top:613.69px;letter-spacing:-0.050px;">Zippy, John (11235)</span>
<span class="m" style="left:621.20px;top:613.69px;letter-spacing:0.049px;">$10.00</span>
<span class="d" style="left:165.20px;top:630.69px;letter-spacing:0.553px;">2/3/2017</span>
<span style="left:393.20px;top:630.69px;letter-spacing:-0.094px;">White, Walter Hartwell (25345479)</span>
<span class="m" style="left:621.20px;top:630.69px;letter-spacing:0.049px;">$10.00</span>
<span class="d" style="left:165.20px;top:647.69px;letter-spacing:0.553px;">2/3/2017</span>
<span style="left:393.20px;top:647.69px;letter-spacing:-0.094px;">White, Walter Hartwell (25345479)</span>
<span class="m" style="left:621.20px;top:647.69px;letter-spacing:0.049px;">$10.00</span>
<span class="d" style="left:165.20px;top:664.69px;letter-spacing:0.553px;">2/3/2017</span>
<span style="left:393.20px;top:664.69px;letter-spacing:-0.050px;">Zippy, John (11235)</span>
<span class="m" style="left:621.20px;top:664.69px;letter-spacing:0.049px;">$10.00</span>
<span class="d" style="left:165.20px;top:681.69px;letter-spacing:0.553px;">2/3/2017</span>
<span style="left:393.20px;top:681.69px;letter-spacing:-0.165px;">Glass, Hugh (25345493)</span>
<span class="m" style="left:621.20px;top:681.69px;letter-spacing:0.049px;">$10.00</span>
<span class="d" style="left:165.20px;top:698.69px;letter-spacing:0.470px;">2/23/2017</span>
<span style="left:393.20px;top:698.69px;letter-spacing:0.076px;">ATESTINS1</span>
<span class="m" style="left:621.20px;top:698.69px;letter-spacing:0.056px;">$100.00</span>
<span class="d" style="left:165.20px;top:715.69px;letter-spacing:0.470px;">1/23/2017</span>
<span style="left:393.20px;top:715.69px;letter-spacing:-0.302px;">BC BS Excellus</span>
<span class="m" style="left:621.20px;top:715.69px;letter-spacing:0.056px;">$100.00</span>
<span class="d" style="left:165.20px;top:732.69px;letter-spacing:0.470px;">3/21/2017</span>
<span style="left:393.20px;top:732.69px;letter-spacing:-0.101px;">MB INS</span>
<span class="m" style="left:621.20px;top:732.69px;letter-spacing:0.056px;">$500.00</span>
<span style="left:159.30px;top:812.89px;letter-spacing:0.064px;">Count: 11</span>
<span style="left:774.00px;top:812.89px;letter-spacing:-0.164px;">Amount: $795.00</span>
<div class="gb" style="left:876px;top:491px;width:717px;height:340px"></div>
<div style="left:884px;top:488px;width:89.6px;height:8px;background:#f0f0f0"></div>
<span class="hd" style="left:887.00px;top:486.79px;font-weight:700;letter-spacing:0.501px;">Open Balances</span>
<div class="rb" style="left:1568px;top:485px"></div><svg style="left:1573px;top:486px" width="15" height="18" viewBox="0 0 15 18"><path d="M1.500 1.500h8.800l3.200 3.200v11.800h-12z" fill="#fff" stroke="#000" stroke-width="1.200"/><path d="M10.200 1.800v3h3" fill="none" stroke="#000" stroke-width=".9"/><g fill="none" stroke="#1a7a1a" stroke-width="1.300"><path d="M4.400 9.600V7.900Q4.400 6.300 6 6.300H7.500"/><path d="M10.600 9V11.200Q10.600 12.800 9 12.800H8"/></g><path d="M7.300 4L10.300 6.300 7.300 8.600zM8.200 10.500L5.100 12.800 8.200 15.100z" fill="#1a7a1a"/></svg>
<div class="dp" style="left:884px;top:509px;border-color:#abadb3"></div>
<span class="d" style="left:891.60px;top:514.59px;letter-spacing:0.853px;">3/ 1/2017</span>
<svg style="left:954px;top:513px" width="12" height="13" viewBox="0 0 12 13"><path d="M1.500 .5h8.500a1 1 0 0 1 1 1v7.500l-2.500 2.500h-7a1 1 0 0 1-1-1v-9a1 1 0 0 1 1-1z" fill="#f4f5f7" stroke="#8b8f97"/><path d="M8.500 11.500v-2a.5.500 0 0 1 .5-.5h2" fill="#dfe1e5" stroke="#8b8f97" stroke-width=".8"/><path d="M2 1.500h8" stroke="#b9bdc6" stroke-width="1.400"/><path d="M2.500 3.500h2v2h-2zM5 3.500h2v2h-2zM7.500 3.500h2v2h-2zM2.500 6h2v2h-2zM5 6h2v2h-2zM7.500 6h2v2h-2zM2.500 8.500h2v1.500h-2zM5 8.500h2v1.500h-2z" fill="#aeb6cc"/></svg>
<svg style="left:967px;top:517px" width="8" height="5" viewBox="0 0 8 5"><path d="M0 0h7.400l-3.700 4.300z" fill="#4e5b76"/></svg>
<span style="left:985.50px;top:513.09px;">To</span>
<div class="dp" style="left:1004px;top:509px;border-color:#abadb3"></div>
<span class="d" style="left:1011.60px;top:514.59px;letter-spacing:0.470px;">4/13/2017</span>
<svg style="left:1074px;top:513px" width="12" height="13" viewBox="0 0 12 13"><path d="M1.500 .5h8.500a1 1 0 0 1 1 1v7.500l-2.500 2.500h-7a1 1 0 0 1-1-1v-9a1 1 0 0 1 1-1z" fill="#f4f5f7" stroke="#8b8f97"/><path d="M8.500 11.500v-2a.5.500 0 0 1 .5-.5h2" fill="#dfe1e5" stroke="#8b8f97" stroke-width=".8"/><path d="M2 1.500h8" stroke="#b9bdc6" stroke-width="1.400"/><path d="M2.500 3.500h2v2h-2zM5 3.500h2v2h-2zM7.500 3.500h2v2h-2zM2.500 6h2v2h-2zM5 6h2v2h-2zM7.500 6h2v2h-2zM2.500 8.500h2v1.500h-2zM5 8.500h2v1.500h-2z" fill="#aeb6cc"/></svg>
<svg style="left:1087px;top:517px" width="8" height="5" viewBox="0 0 8 5"><path d="M0 0h7.400l-3.700 4.300z" fill="#4e5b76"/></svg>
<div class="cb" style="left:1106px;top:509px;width:92px"></div>
<span style="left:1110.20px;top:514.59px;">Both</span>
<svg style="left:1185px;top:516.5px" width="9" height="7" viewBox="0 0 9 7"><path d="M.8.900l3.400 4 3.400-4" fill="none" stroke="#4a4a4a" stroke-width="1.800"/></svg>
<div class="lv" style="left:884px;top:533px;width:700px;height:271px"><div class="lh"></div><div class="sep" style="left:169px"></div><div class="sep" style="left:339px"></div><div class="sep" style="left:509px"></div><div class="sep" style="left:679px"></div></div>
<span style="left:892.20px;top:541.69px;letter-spacing:-0.050px;">Date</span>
<span style="left:1062.20px;top:541.69px;">Patient Payor</span>
<span style="left:1232.20px;top:541.69px;">Assigned Payor</span>
<span style="left:1402.20px;top:541.69px;letter-spacing:-0.404px;">Amount</span>
<span class="d" style="left:892.20px;top:562.69px;letter-spacing:0.404px;">03/15/2017</span>
<span style="left:1062.20px;top:562.69px;letter-spacing:-0.154px;">Wheatley, Summer (112355)</span>
<span style="left:1232.20px;top:562.69px;letter-spacing:-0.309px;">BC BS Excellus (P)</span>
<span class="m" style="left:1402.20px;top:562.69px;letter-spacing:0.056px;">$100.00</span>
<span class="d" style="left:892.20px;top:579.69px;letter-spacing:0.404px;">03/21/2017</span>
<span style="left:1062.20px;top:579.69px;letter-spacing:-0.130px;">Burgundy, Ron (253454908)</span>
<span style="left:1232.20px;top:579.69px;letter-spacing:-0.309px;">BC BS Excellus (P)</span>
<span class="m" style="left:1402.20px;top:579.69px;letter-spacing:0.049px;">$25.00</span>
<span class="d" style="left:892.20px;top:596.69px;letter-spacing:0.404px;">03/21/2017</span>
<span style="left:1062.20px;top:596.69px;letter-spacing:-0.050px;">Zippy, John (11235)</span>
<span style="left:1232.20px;top:596.69px;letter-spacing:-0.050px;">Zippy, John (11235)</span>
<span class="m" style="left:1402.20px;top:596.69px;letter-spacing:0.049px;">$10.00</span>
<span class="d" style="left:892.20px;top:613.69px;letter-spacing:0.404px;">03/21/2017</span>
<span style="left:1062.20px;top:613.69px;letter-spacing:-0.050px;">Zippy, John (11235)</span>
<span style="left:1232.20px;top:613.69px;letter-spacing:-0.309px;">BC BS Excellus (P)</span>
<span class="m" style="left:1402.20px;top:613.69px;letter-spacing:0.049px;">$85.00</span>
<span class="d" style="left:892.20px;top:630.69px;letter-spacing:0.404px;">04/10/2017</span>
<span style="left:1062.20px;top:630.69px;letter-spacing:-0.125px;">Butter, Peanut</span>
<span style="left:1232.20px;top:630.69px;letter-spacing:-0.309px;">BC BS Excellus (P)</span>
<span class="m" style="left:1402.20px;top:630.69px;letter-spacing:0.056px;">$100.00</span>
<span class="d" style="left:892.20px;top:647.69px;letter-spacing:0.404px;">04/04/2017</span>
<span style="left:1062.20px;top:647.69px;letter-spacing:-0.154px;">Wheatley, Summer (112355)</span>
<span style="left:1232.20px;top:647.69px;letter-spacing:-0.309px;">BC BS Excellus (P)</span>
<span class="m" style="left:1402.20px;top:647.69px;letter-spacing:0.056px;">$100.00</span>
<span class="d" style="left:892.20px;top:664.69px;letter-spacing:0.404px;">04/10/2017</span>
<span style="left:1062.20px;top:664.69px;letter-spacing:-0.125px;">Butter, Peanut</span>
<span style="left:1232.20px;top:664.69px;letter-spacing:-0.309px;">BC BS Excellus (P)</span>
<span class="m" style="left:1402.20px;top:664.69px;letter-spacing:0.056px;">$100.00</span>
<span class="d" style="left:892.20px;top:681.69px;letter-spacing:0.494px;">04/11/2017</span>
<span style="left:1062.20px;top:681.69px;letter-spacing:-0.125px;">Butter, Peanut</span>
<span style="left:1232.20px;top:681.69px;letter-spacing:-0.309px;">BC BS Excellus (P)</span>
<span class="m" style="left:1402.20px;top:681.69px;letter-spacing:0.049px;">$60.00</span>
<span class="d" style="left:892.20px;top:698.69px;letter-spacing:0.404px;">04/10/2017</span>
<span style="left:1062.20px;top:698.69px;letter-spacing:-0.125px;">Butter, Peanut</span>
<span style="left:1232.20px;top:698.69px;letter-spacing:-0.309px;">BC BS Excellus (P)</span>
<span class="m" style="left:1402.20px;top:698.69px;letter-spacing:0.049px;">$25.00</span>
<span style="left:886.30px;top:812.89px;letter-spacing:-0.056px;">Count: 9</span>
<span style="left:1501.00px;top:812.89px;letter-spacing:-0.164px;">Amount: $605.00</span>
<div class="sp" style="left:6px;width:253px;overflow:hidden"></div>
<span class="st" style="left:9.40px;top:841.64px;font-size:12px;letter-spacing:-0.383px;">User: Bruce Boss (bboss)</span>
<div class="sp" style="left:261px;width:198px;overflow:hidden"></div>
<span class="st" style="left:264.40px;top:841.64px;font-size:12px;letter-spacing:0.005px;">Type: Supervisor/Clinician (admin)</span>
<div class="sp" style="left:461px;width:132px;overflow:hidden"></div>
<span class="st" style="left:464.40px;top:841.64px;font-size:12px;letter-spacing:-0.028px;">Instance: Testing</span>
<div class="sp" style="left:595px;width:199px;overflow:hidden"></div>
<span class="st" style="left:598.40px;top:841.64px;font-size:12px;letter-spacing:-0.137px;">Log On Time: 4/13/2017 9:14:34 AM</span>
<div class="sp" style="left:796px;width:103px;overflow:hidden"></div>
<span class="st" style="left:799.40px;top:841.64px;font-size:12px;letter-spacing:-0.375px;">Version: 8.01.053</span>
<div class="sp" style="left:901px;width:178px;overflow:hidden"></div>
<span class="st" style="left:904.40px;top:841.64px;font-size:12px;letter-spacing:-0.276px;">Computer: CTTS01</span>
<div class="sp" style="left:1081px;width:179px;overflow:hidden"></div>
<span class="st" style="left:1084.40px;top:841.64px;font-size:12px;letter-spacing:0.054px;">Path: \\beast\ClinicTracker_Testir</span>
<div style="left:0;top:858px;width:1600px;height:2px;background:#fafafa"></div>
<div style="left:0;top:860px;width:1600px;height:1px;background:#151515"></div>
</body></html>
